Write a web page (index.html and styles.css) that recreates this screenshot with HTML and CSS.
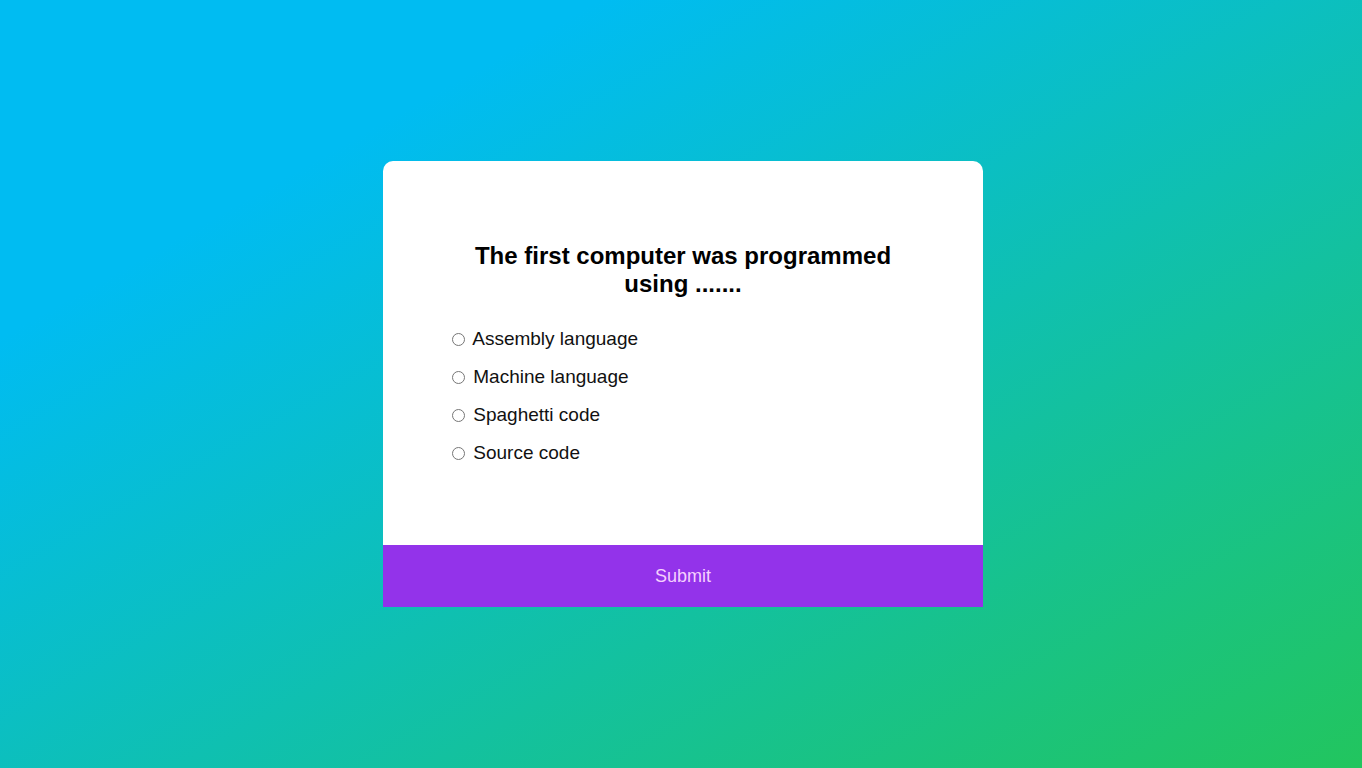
FILE: index.html
```html
<!DOCTYPE html>
<html lang="en">
<head>
<meta charset="utf-8">
<title>Quiz</title>
<link rel="stylesheet" href="styles.css">
</head>
<body>
<div class="quiz">
  <div class="quiz-body">
    <h2 class="question">The first computer was programmed using .......</h2>
    <ul class="answers">
      <li><label><input type="radio" name="answer"> Assembly language</label></li>
      <li><label><input type="radio" name="answer"> Machine language</label></li>
      <li><label><input type="radio" name="answer"> Spaghetti code</label></li>
      <li><label><input type="radio" name="answer"> Source code</label></li>
    </ul>
  </div>
  <button class="submit" type="button">Submit</button>
</div>
</body>
</html>
```

FILE: styles.css
```css
* { box-sizing: border-box; }
html, body { height: 100%; }
body {
  margin: 0;
  font-family: "Liberation Sans", Arial, sans-serif;
  background: linear-gradient(to bottom right, #00bcf2 22%, #22c55e 100%);
  display: flex;
  align-items: center;
  justify-content: center;
  padding-left: 4px;
}
.quiz {
  width: 600px;
  background: #fff;
  border-radius: 10px;
}
.quiz-body {
  padding: 64px 64px 65px;
}
.question {
  margin: 17px 0 30px;
  text-align: center;
  font-size: 24px;
  line-height: 28px;
  font-weight: bold;
  color: #000;
}
.answers {
  list-style: none;
  margin: 0;
  padding: 0;
}
.answers li {
  font-size: 19px;
  line-height: 22px;
  margin: 16px 0;
  color: #111;
}
.answers input {
  margin: 0 3px 0 5px;
  width: 13px;
  height: 13px;
  vertical-align: -1px;
}
.submit {
  display: block;
  width: 100%;
  height: 62px;
  border: 0;
  margin: 0;
  padding: 1px 0 0;
  border-radius: 0;
  background: #9333ea;
  color: #f5d0fe;
  font-family: "Liberation Sans", Arial, sans-serif;
  font-size: 18px;
  cursor: pointer;
}
```
